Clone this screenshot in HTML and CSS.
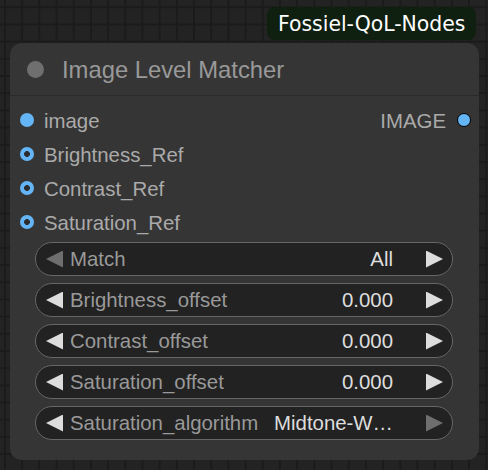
FILE: index.html
```html
<!DOCTYPE html>
<html>
<head>
<meta charset="utf-8">
<link rel="stylesheet" href="styles.css">
</head>
<body>
<div class="canvas">
  <div class="badge">Fossiel-QoL-Nodes</div>
  <div class="node">
    <div class="title">
      <span class="title-dot"></span>
      <span class="title-text">Image Level Matcher</span>
    </div>
    <div class="slots">
      <div class="slot-row">
        <div class="slot-in"><span class="pin"></span><span class="slot-label">image</span></div>
        <div class="slot-out"><span class="slot-label">IMAGE</span><span class="pin pin-out"></span></div>
      </div>
      <div class="slot-row">
        <div class="slot-in"><span class="pin pin-opt"></span><span class="slot-label">Brightness_Ref</span></div>
      </div>
      <div class="slot-row">
        <div class="slot-in"><span class="pin pin-opt"></span><span class="slot-label">Contrast_Ref</span></div>
      </div>
      <div class="slot-row">
        <div class="slot-in"><span class="pin pin-opt"></span><span class="slot-label">Saturation_Ref</span></div>
      </div>
    </div>
    <div class="widgets">
      <div class="widget">
        <span class="arrow arrow-left arrow-off"></span>
        <span class="w-label">Match</span>
        <span class="w-value">All</span>
        <span class="arrow arrow-right"></span>
      </div>
      <div class="widget">
        <span class="arrow arrow-left"></span>
        <span class="w-label">Brightness_offset</span>
        <span class="w-value">0.000</span>
        <span class="arrow arrow-right"></span>
      </div>
      <div class="widget">
        <span class="arrow arrow-left"></span>
        <span class="w-label">Contrast_offset</span>
        <span class="w-value">0.000</span>
        <span class="arrow arrow-right"></span>
      </div>
      <div class="widget">
        <span class="arrow arrow-left"></span>
        <span class="w-label">Saturation_offset</span>
        <span class="w-value">0.000</span>
        <span class="arrow arrow-right"></span>
      </div>
      <div class="widget">
        <span class="arrow arrow-left"></span>
        <span class="w-label">Saturation_algorithm</span>
        <span class="w-value">Midtone-W…</span>
        <span class="arrow arrow-right arrow-off"></span>
      </div>
    </div>
  </div>
</div>
</body>
</html>
```
FILE: styles.css
```css
html, body {
  margin: 0;
  padding: 0;
}
body {
  width: 488px;
  height: 470px;
  overflow: hidden;
  background-color: #232323;
  background-image:
    linear-gradient(to right, #1b1b1b 2px, transparent 2px),
    linear-gradient(to bottom, #1b1b1b 2px, transparent 2px);
  background-size: 17.2px 17.2px;
  background-position: 4px 6.3px;
  font-family: "Liberation Sans", Arial, sans-serif;
}
.canvas {
  position: relative;
  width: 488px;
  height: 470px;
}
.badge {
  position: absolute;
  left: 267px;
  top: 7px;
  width: 209px;
  height: 33px;
  box-sizing: border-box;
  padding-left: 11px;
  display: flex;
  align-items: center;
  border-radius: 8px;
  background: #0f1f10;
  color: #ffffff;
  font-family: "DejaVu Sans", sans-serif;
  font-size: 20.4px;
  white-space: nowrap;
}
.node {
  position: absolute;
  left: 10px;
  top: 43px;
  width: 469px;
  height: 417px;
  box-sizing: border-box;
  background: #353535;
  border-radius: 12px;
  display: flex;
  flex-direction: column;
}
.title {
  height: 53px;
  box-sizing: border-box;
  border-bottom: 1px solid #2a2a2a;
  display: flex;
  align-items: center;
  padding-left: 17px;
}
.title-dot {
  width: 17px;
  height: 17px;
  border-radius: 50%;
  background: #6f6f6f;
  margin-top: 1px;
}
.title-text {
  margin-left: 18px;
  font-size: 23.8px;
  color: #999999;
  padding-top: 2px;
}
.slots {
  padding-top: 7px;
  display: flex;
  flex-direction: column;
}
.slot-row {
  height: 34px;
  display: flex;
  align-items: center;
  justify-content: space-between;
}
.slot-in, .slot-out {
  display: flex;
  align-items: center;
}
.slot-in {
  padding-left: 10px;
}
.slot-out {
  padding-right: 8px;
}
.slot-label {
  font-size: 20.4px;
  color: #aaaaaa;
  padding-top: 3px;
}
.slot-in .slot-label {
  margin-left: 10px;
}
.slot-out .slot-label {
  margin-right: 11px;
}
.pin {
  width: 14px;
  height: 14px;
  box-sizing: border-box;
  border-radius: 50%;
  background: #64b5f6;
}
.pin-opt {
  background: radial-gradient(circle, #2c2c2c 0 2.6px, #64b5f6 3.2px);
}
.pin-out {
  border: 1.5px solid #000000;
}
.widgets {
  margin-top: 3px;
  padding: 0 26px 0 25px;
  display: flex;
  flex-direction: column;
  gap: 7px;
}
.widget {
  height: 34px;
  box-sizing: border-box;
  border: 1px solid #666666;
  border-radius: 17px;
  background: #222222;
  display: flex;
  align-items: center;
  padding: 0 9px 0 10px;
  font-size: 20.4px;
  white-space: nowrap;
}
.arrow {
  width: 17px;
  height: 17px;
  flex: none;
  background: #dddddd;
}
.arrow-left {
  clip-path: polygon(100% 0, 0 50%, 100% 100%);
  margin-right: 7px;
}
.arrow-right {
  clip-path: polygon(0 0, 100% 50%, 0 100%);
  margin-left: 33px;
}
.arrow-off {
  background: #6e6e6e;
}
.w-label {
  flex: 1;
  color: #999999;
}
.w-value {
  color: #dddddd;
}
```
